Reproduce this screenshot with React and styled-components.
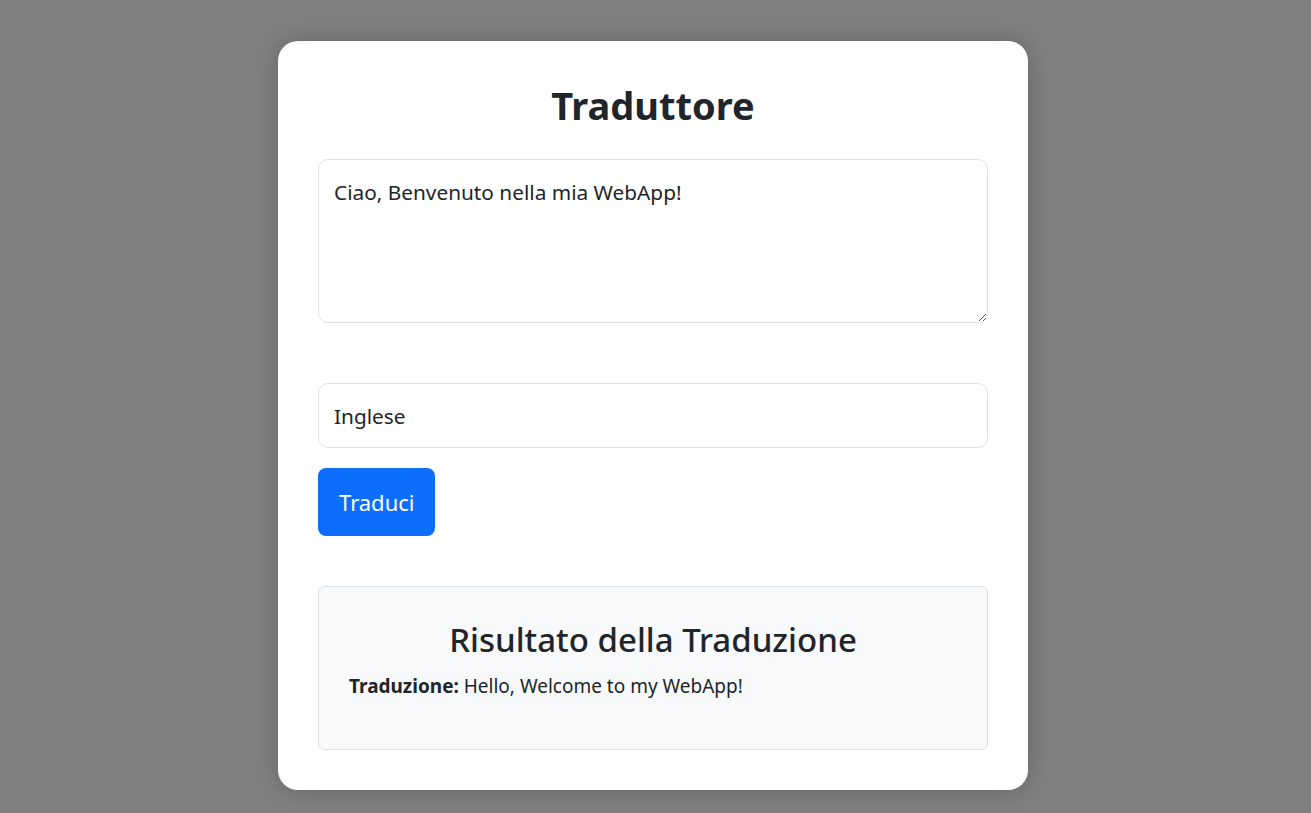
import styled, { createGlobalStyle } from 'styled-components'

const GlobalStyle = createGlobalStyle`
  html, body {
    margin: 0;
    padding: 0;
    background: #808080;
    font-family: "Noto Sans", "Liberation Sans", sans-serif;
    color: #212529;
  }
  * { box-sizing: border-box; }
`

const Page = styled.div`
  display: flex;
  justify-content: center;
  padding: 41px 5px 0 0;
  min-height: 813px;
`

const Card = styled.div`
  width: 750px;
  height: 749px;
  background: #fff;
  border-radius: 20px;
  padding: 40px;
  box-shadow: 0 0 24px rgba(0, 0, 0, 0.22);
  display: flex;
  flex-direction: column;
`

const Title = styled.h1`
  margin: 0 0 30px;
  font-size: 38px;
  line-height: 48px;
  font-weight: 700;
  text-align: center;
`

const TextArea = styled.textarea`
  display: block;
  width: 100%;
  height: 164px;
  margin: 0 0 60px;
  padding: 17px 15px;
  border: 1px solid #dee2e6;
  border-radius: 10px;
  font-family: inherit;
  font-size: 20.8px;
  line-height: 30px;
  color: #212529;
  resize: vertical;
  outline: none;
`

const Input = styled.input`
  display: block;
  width: 100%;
  height: 65px;
  margin: 0 0 20px;
  padding: 0 15px;
  border: 1px solid #dee2e6;
  border-radius: 10px;
  font-family: inherit;
  font-size: 20.8px;
  color: #212529;
  outline: none;
`

const Button = styled.button`
  align-self: flex-start;
  height: 68px;
  padding: 0 21px;
  margin: 0 0 50px;
  border: none;
  border-radius: 8px;
  background: #0d6efd;
  color: #fff;
  font-family: inherit;
  font-size: 22px;
  cursor: pointer;
`

const Result = styled.div`
  height: 164px;
  background: #f8f9fa;
  border: 1px solid #dee2e6;
  border-radius: 6px;
  padding: 33px 30px 30px;
`

const ResultTitle = styled.h3`
  margin: 0 0 13px;
  font-size: 33px;
  line-height: 40px;
  font-weight: 500;
  text-align: center;
`

const ResultText = styled.p`
  margin: 0;
  font-size: 19px;
  line-height: 27px;
  strong { font-weight: 700; }
`

export default function App() {
  return (
    <>
      <GlobalStyle />
      <Page>
        <Card>
          <Title>Traduttore</Title>
          <TextArea defaultValue="Ciao, Benvenuto nella mia WebApp!" />
          <Input defaultValue="Inglese" />
          <Button>Traduci</Button>
          <Result>
            <ResultTitle>Risultato della Traduzione</ResultTitle>
            <ResultText>
              <strong>Traduzione:</strong> Hello, Welcome to my WebApp!
            </ResultText>
          </Result>
        </Card>
      </Page>
    </>
  )
}
